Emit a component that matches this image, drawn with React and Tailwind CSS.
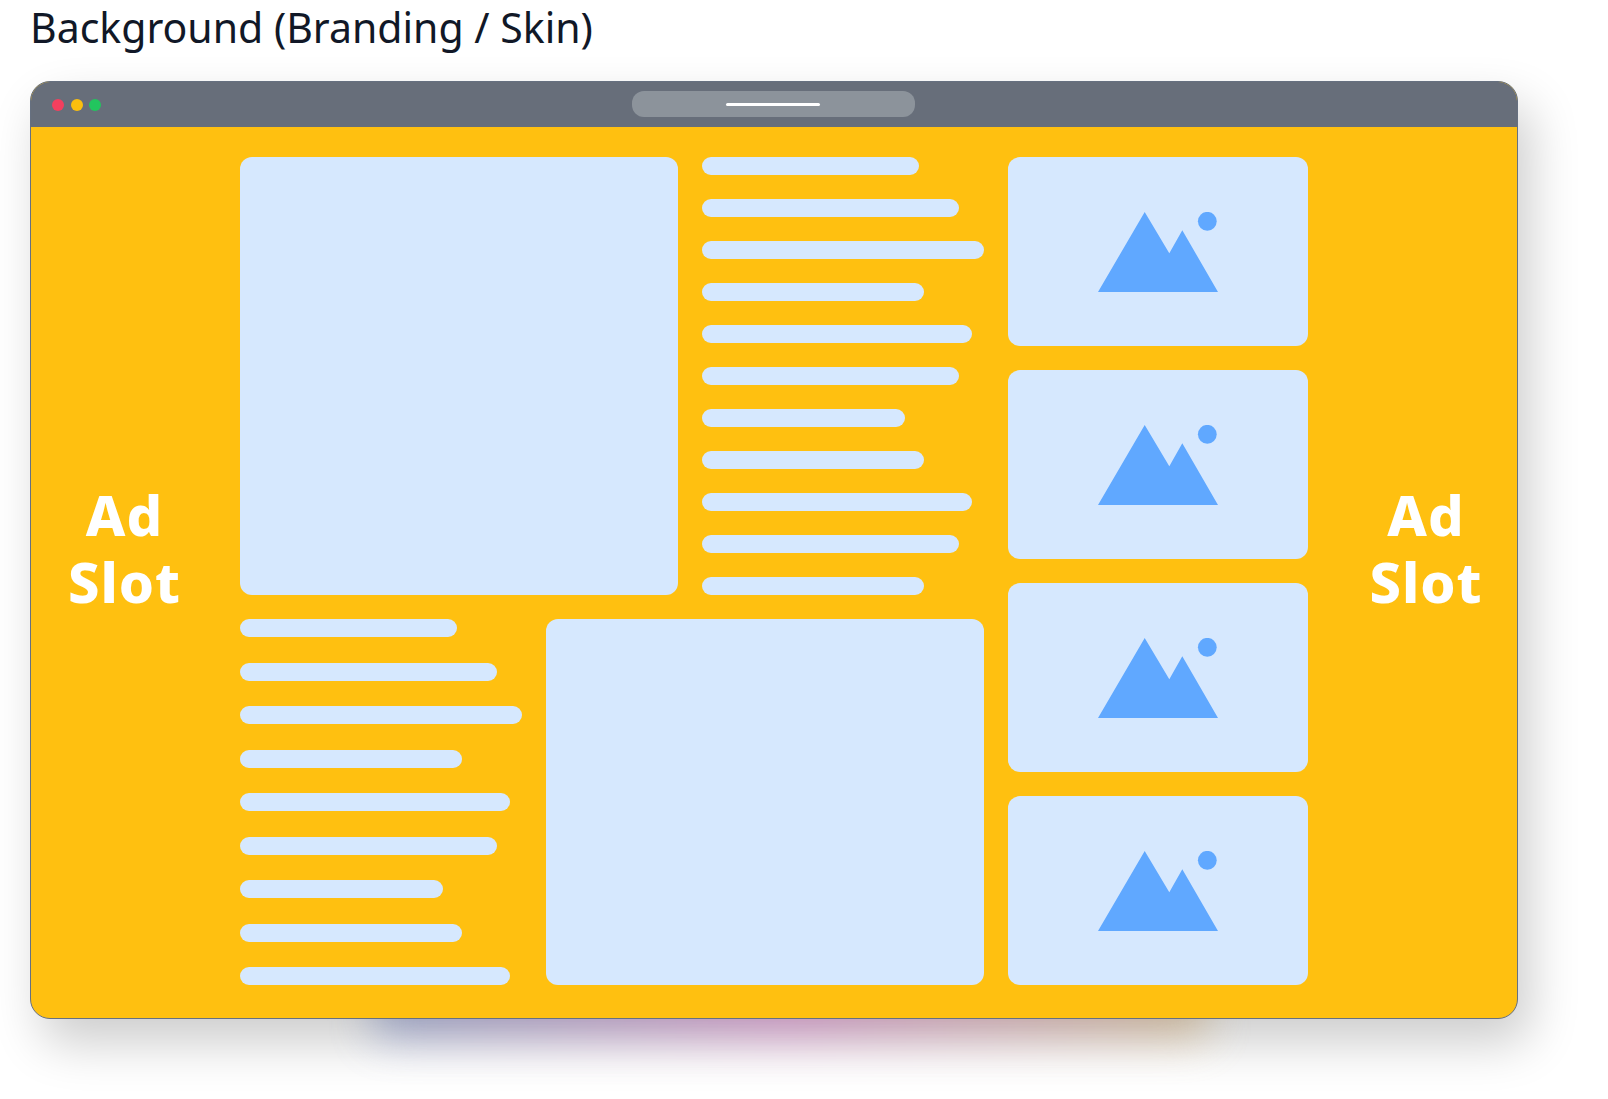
const topBars = [217, 257, 282, 222, 270, 257, 203, 222, 270, 257, 222];
const bottomBars = [217, 257, 282, 222, 270, 257, 203, 222, 270];

function Bars({ widths }) {
  return (
    <div className="flex flex-col justify-between">
      {widths.map((w, i) => (
        <div key={i} className="h-[18px] rounded-full bg-[#d6e8fe]" style={{ width: w }} />
      ))}
    </div>
  );
}

function ImageCard() {
  return (
    <div className="flex h-[189px] items-center justify-center rounded-xl bg-[#d6e8fe]">
      <svg width="120" height="80" viewBox="0 0 120 80" fill="#60a8ff">
        <path d="M0 80L46.7 0L71.3 41.3L84.3 18.3L120 80Z" />
        <circle cx="109.3" cy="9.3" r="9.4" />
      </svg>
    </div>
  );
}

function AdSlot({ className }) {
  return (
    <div className={`flex items-center justify-center pb-[80px] text-center text-[56px] leading-[67px] font-extrabold tracking-[1px] text-white ${className}`}>
      <span>
        Ad
        <br />
        Slot
      </span>
    </div>
  );
}

export default function App() {
  return (
    <div className="min-h-[1099px] overflow-hidden bg-white pl-[30px] font-['Noto_Sans',sans-serif]">
      <h1 className="h-[81px] text-[41px] leading-[54px] font-normal text-[#111827]">
        Background (Branding / Skin)
      </h1>

      <div className="relative w-[1488px]">
        {/* colored glow under the window */}
        <div className="absolute top-[895px] left-[345px] h-[60px] w-[830px] bg-gradient-to-r from-[#8fa2d8] via-[#e68cd6] to-[#e8c890] opacity-70 blur-[22px]" />

        <div className="relative flex h-[938px] flex-col overflow-hidden rounded-[20px] border border-[#667080] bg-[#ffc010] shadow-[12px_24px_50px_rgba(0,0,0,0.2)]">
          <div className="relative flex h-[45px] shrink-0 items-center bg-[#676e7a] pl-[21px]">
            <div className="flex gap-[6.5px]">
              <div className="h-[12px] w-[12px] rounded-full bg-[#f43f5e]" />
              <div className="h-[12px] w-[12px] rounded-full bg-[#fbbf0e]" />
              <div className="h-[12px] w-[12px] rounded-full bg-[#22c55e]" />
            </div>
            <div className="absolute top-[9px] left-[600.5px] flex h-[26px] w-[283px] items-center justify-center rounded-xl bg-[#8c939b]">
              <div className="mt-[1px] h-[3px] w-[94px] rounded-full bg-white" />
            </div>
          </div>

          <div className="grid flex-1 grid-cols-[209px_1068px_1fr] pt-[30px]">
            <AdSlot className="pr-[22px]" />

            <div className="flex h-[828px] gap-6">
              <div className="flex w-[744px] flex-col gap-6">
                <div className="flex h-[438px] gap-6">
                  <div className="w-[438px] rounded-xl bg-[#d6e8fe]" />
                  <Bars widths={topBars} />
                </div>
                <div className="flex h-[366px] gap-6">
                  <div className="flex w-[282px]">
                    <Bars widths={bottomBars} />
                  </div>
                  <div className="w-[438px] rounded-xl bg-[#d6e8fe]" />
                </div>
              </div>
              <div className="flex w-[300px] flex-col gap-6">
                <ImageCard />
                <ImageCard />
                <ImageCard />
                <ImageCard />
              </div>
            </div>

            <AdSlot className="pl-[27px]" />
          </div>
        </div>
      </div>
    </div>
  );
}
